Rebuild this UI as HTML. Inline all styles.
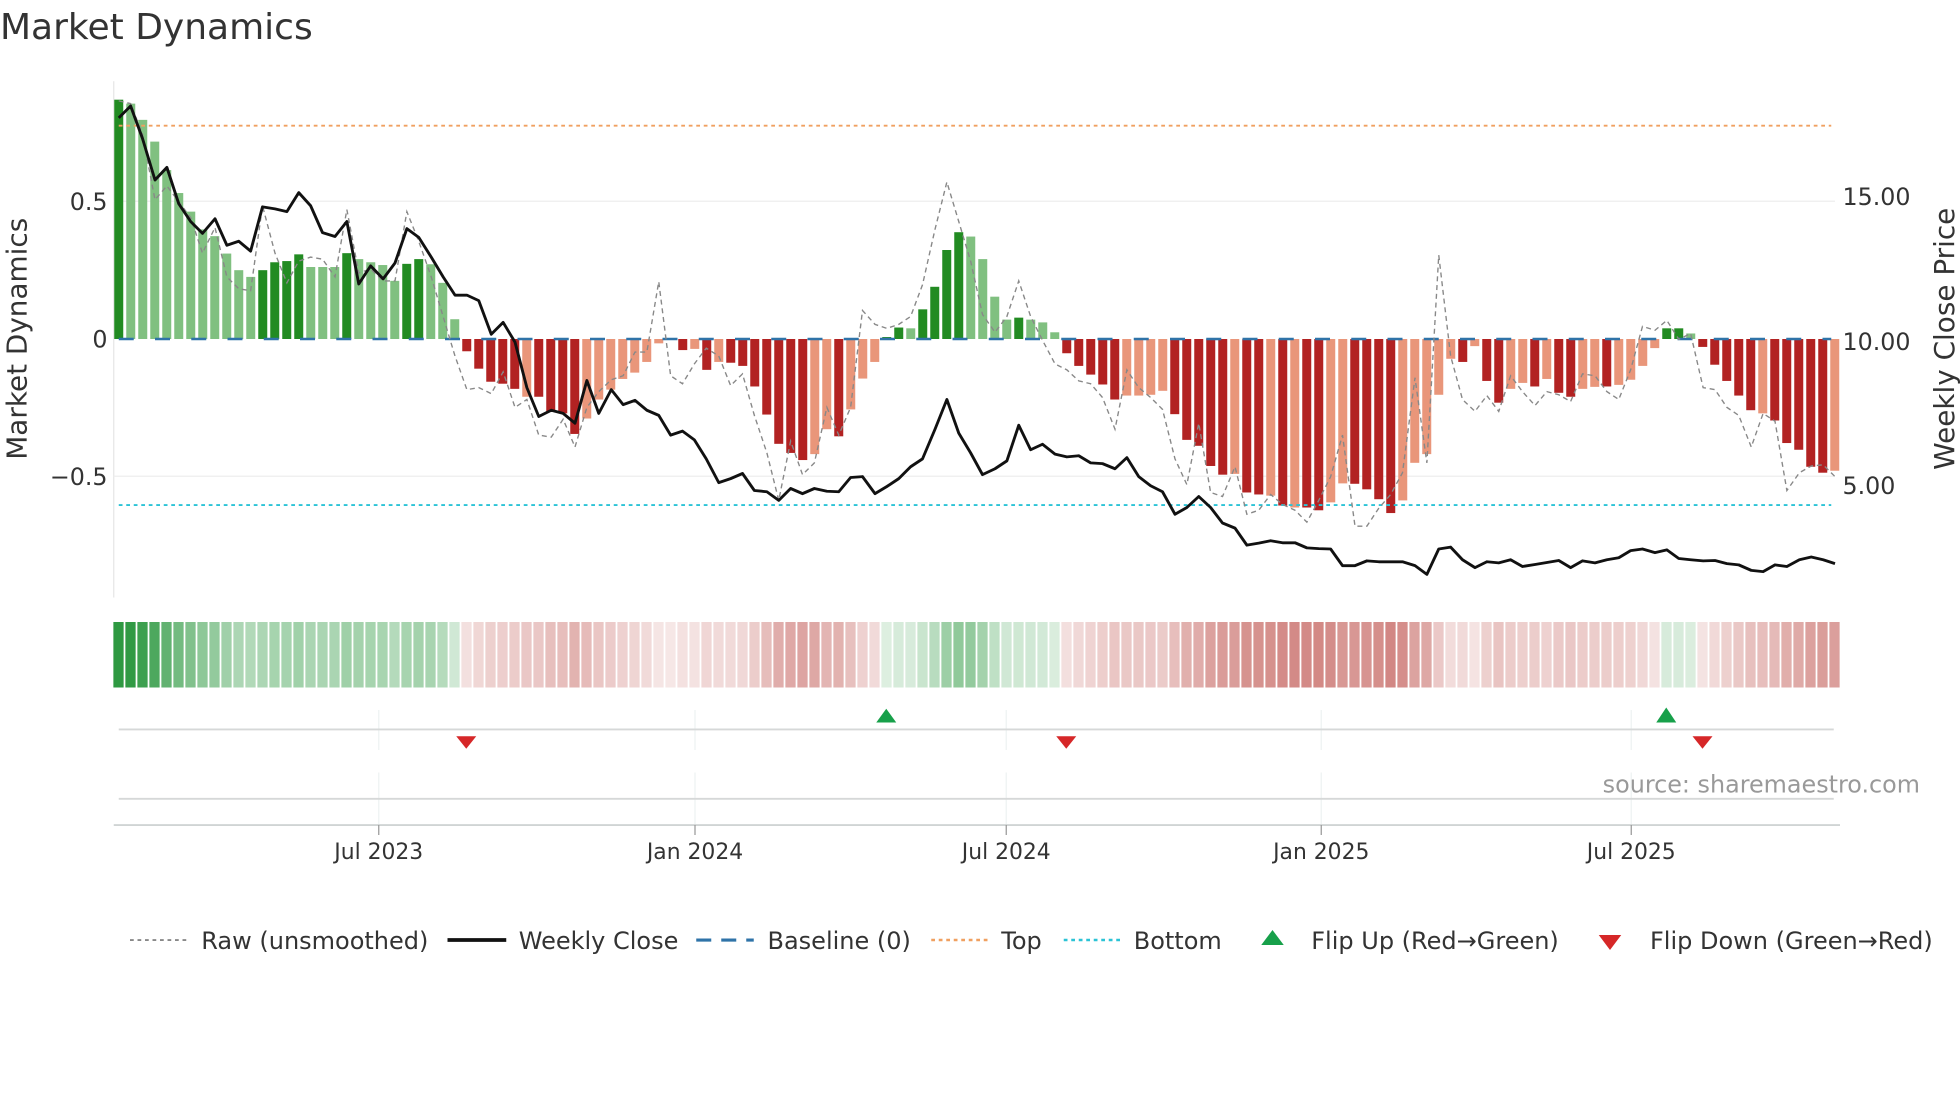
<!DOCTYPE html>
<html><head><meta charset="utf-8"><style>
html,body{margin:0;padding:0;background:#fff;}
svg{display:block;font-family:"DejaVu Sans","Liberation Sans",sans-serif;}
</style></head><body>
<svg id="s" width="1960" height="1102" viewBox="0 0 1568 881.6" xmlns="http://www.w3.org/2000/svg">
<text x="0" y="31" font-size="28.8" fill="#333">Market Dynamics</text>
<line x1="91" y1="65" x2="91" y2="478" stroke="#e6e6e6" stroke-width="1"/>
<line x1="91" y1="161" x2="1468" y2="161" stroke="#eeeeee" stroke-width="1"/>
<line x1="91" y1="381" x2="1468" y2="381" stroke="#eeeeee" stroke-width="1"/>
<g id="bars"></g>
<line x1="95" y1="100.5" x2="1465" y2="100.5" stroke="#f0a060" stroke-width="1.5" stroke-dasharray="3,3"/>
<line x1="95" y1="404" x2="1465" y2="404" stroke="#2bc3d6" stroke-width="1.5" stroke-dasharray="3,3"/>
<line x1="95" y1="271.2" x2="1465" y2="271.2" stroke="#2f73a8" stroke-width="2" stroke-dasharray="12,17"/>
<path id="raw" fill="none" stroke="#888" stroke-width="1.1" stroke-dasharray="4,3"/>
<path id="close" fill="none" stroke="#111" stroke-width="2.3" stroke-linejoin="round"/>
<g font-size="19" fill="#333" text-anchor="end">
<text x="86" y="168">0.5</text><text x="86" y="278">0</text><text x="86" y="388">−0.5</text>
</g>
<g font-size="19" fill="#333">
<text x="1474" y="164">15.00</text><text x="1474" y="280">10.00</text><text x="1474" y="395">5.00</text>
</g>
<text transform="translate(21,271) rotate(-90)" font-size="22.3" fill="#333" text-anchor="middle">Market Dynamics</text>
<text transform="translate(1563,271) rotate(-90)" font-size="22.3" fill="#333" text-anchor="middle">Weekly Close Price</text>
<g id="strip"></g>
<g stroke="#eef2f2" stroke-width="1">
<line x1="303" y1="568" x2="303" y2="600"/><line x1="556" y1="568" x2="556" y2="600"/><line x1="805" y1="568" x2="805" y2="600"/><line x1="1057" y1="568" x2="1057" y2="600"/><line x1="1305" y1="568" x2="1305" y2="600"/>
<line x1="303" y1="618" x2="303" y2="660"/><line x1="556" y1="618" x2="556" y2="660"/><line x1="805" y1="618" x2="805" y2="660"/><line x1="1057" y1="618" x2="1057" y2="660"/><line x1="1305" y1="618" x2="1305" y2="660"/>
</g>
<line x1="95" y1="583.5" x2="1467" y2="583.5" stroke="#d6d8d8" stroke-width="1.5"/>
<line x1="95" y1="639" x2="1467" y2="639" stroke="#d6d8d8" stroke-width="1.5"/>
<line x1="91" y1="660" x2="1472" y2="660" stroke="#d0d4d4" stroke-width="1.5"/>
<g stroke="#999" stroke-width="1">
<line x1="303" y1="660" x2="303" y2="668"/><line x1="556" y1="660" x2="556" y2="668"/><line x1="805" y1="660" x2="805" y2="668"/><line x1="1057" y1="660" x2="1057" y2="668"/><line x1="1305" y1="660" x2="1305" y2="668"/>
</g>
<g fill="#17a04a">
<path d="M709,567 L717,578 L701,578 Z"/><path d="M1333,566 L1341,578 L1325,578 Z"/>
</g>
<g fill="#d62728">
<path d="M365,589 L381,589 L373,599 Z"/><path d="M845,589 L861,589 L853,599 Z"/><path d="M1354,589 L1370,589 L1362,599 Z"/>
</g>
<g font-size="17.5" fill="#333" text-anchor="middle">
<text x="303" y="687">Jul 2023</text><text x="556" y="687">Jan 2024</text><text x="805" y="687">Jul 2024</text><text x="1057" y="687">Jan 2025</text><text x="1305" y="687">Jul 2025</text>
</g>
<text x="1536" y="634" font-size="19.1" fill="#999" text-anchor="end">source: sharemaestro.com</text>
<g font-size="19.2" fill="#333">
<line x1="104" y1="752" x2="149" y2="752" stroke="#888" stroke-width="1.5" stroke-dasharray="3,3"/>
<text x="161" y="759">Raw (unsmoothed)</text>
<line x1="358" y1="752" x2="405" y2="752" stroke="#111" stroke-width="3"/>
<text x="415" y="759">Weekly Close</text>
<line x1="557" y1="752" x2="603" y2="752" stroke="#2f73a8" stroke-width="2.5" stroke-dasharray="12,8"/>
<text x="614" y="759">Baseline (0)</text>
<line x1="745" y1="752" x2="790" y2="752" stroke="#f0a060" stroke-width="2" stroke-dasharray="3,3"/>
<text x="801" y="759">Top</text>
<line x1="851" y1="752" x2="896" y2="752" stroke="#2bc3d6" stroke-width="2" stroke-dasharray="3,3"/>
<text x="907" y="759">Bottom</text>
<path d="M1018,744 L1027,756 L1009,756 Z" fill="#17a04a"/>
<text x="1049" y="759">Flip Up (Red→Green)</text>
<path d="M1279,748 L1297,748 L1288,760 Z" fill="#d62728"/>
<text x="1320" y="759">Flip Down (Green→Red)</text>
</g>
</svg>
<script>
var zy=[252,262,303,358,430,488,535,580,597,641,683,700,683,663,660,643,675,675,675,640,655,663,670,710,667,655,668,715,807,
888,932,965,970,983,1003,1003,1040,1045,1097,1058,1010,985,958,942,915,868,857,885,882,935,915,917,925,977,1048,1122,1145,1163,1148,1085,1103,1035,957,915,
852,828,830,782,725,632,587,598,
655,750,808,803,808,815,840,
893,925,947,972,1010,1000,1000,998,988,1047,1112,1127,1178,1200,1198,1245,1250,1253,1278,1283,1283,1290,1270,1222,1223,1237,1262,1297,1265,1170,1148,998,907,915,875,963,1018,983,968,977,958,993,1003,983,978,977,973,960,925,880,
830,830,843,
877,922,963,1000,1037,1045,1063,1120,1137,1180,1195,1190];
var col="dllllllllllldddd"+"llld"+"llll"+"dd"+"lll"+"dddddldddd"+"llllllll"+"dldl"+"ddddddd"+"ll"+"d"+"lll"+"ddlddddl"+"llldlll"+"dddddllll"+"ddddd"+"l"+"dd"+"l"+"d"+"l"+"dd"+"ll"+"dddd"+"lllll"+"d"+"l"+"dd"+"ll"+"d"+"l"+"dd"+"ll"+"d"+"llll"+"ddl"+"dddddldddddl";
var NS="http://www.w3.org/2000/svg";
function el(t,a,p){var e=document.createElementNS(NS,t);for(var k in a)e.setAttribute(k,a[k]);p.appendChild(e);return e;}
var bars=document.getElementById("bars"),strip=document.getElementById("strip");
var Z=271.2;
for(var i=0;i<zy.length;i++){
  var x=95+9.6*i, y=zy[i]/3.16, v=(Z-y)/220, c=col[i]||"l";
  var pos=y<Z;
  var fill=pos?(c=="d"?"#228B22":"#80c080"):(c=="d"?"#B22222":"#E9967A");
  if(Math.abs(y-Z)>0.5) el("rect",{x:x-3.6,y:Math.min(y,Z),width:7.2,height:Math.abs(y-Z),fill:fill},bars);
  var t=Math.min(1,Math.abs(v)/0.9), a=0.15+0.85*t;
  var b=pos?[40,150,60]:[195,95,90];
  var r=Math.round(255+(b[0]-255)*a),g=Math.round(255+(b[1]-255)*a),bb=Math.round(255+(b[2]-255)*a);
  el("rect",{x:x-4.3,y:497.6,width:8.2,height:52.4,fill:"rgb("+r+","+g+","+bb+")"},strip);
}
function path(s1,s2){var pts=[];
 s1.trim().split(/\s+/).forEach(function(p){var q=p.split(",");pts.push([q[0]/2,q[1]/3.16]);});
 s2.trim().split(/\s+/).forEach(function(p){var q=p.split(",");pts.push([784+q[0]/2,q[1]/3.16]);});
 return "M"+pts.map(function(p){return p[0].toFixed(1)+","+p[1].toFixed(1)}).join(" L");}
var c1="190,298 209,268 228,350 248,455 267,423 286,515 305,560 324,590 344,553 363,620 382,610 401,635 420,523 440,528 459,535 478,487 497,520 516,588 536,598 555,560 574,718 593,672 613,705 632,665 651,578 670,600 690,650 709,700 728,746 747,746 766,760 786,845 805,815 824,865 843,980 862,1053 882,1037 901,1045 920,1070 939,962 958,1045 978,985 997,1023 1016,1012 1035,1037 1054,1050 1073,1100 1092,1090 1111,1112 1130,1160 1150,1220 1169,1210 1188,1197 1207,1240 1227,1243 1246,1265 1265,1235 1284,1248 1303,1235 1323,1242 1342,1243 1361,1207 1380,1205 1400,1248 1419,1230 1438,1210 1457,1180 1476,1160 1496,1085 1515,1010 1534,1095 1553,1145";
var c2="4,1200 24,1185 43,1165 62,1075 81,1137 100,1123 120,1148 139,1155 158,1152 177,1170 196,1172 216,1185 235,1157 254,1205 273,1228 292,1243 312,1300 331,1283 350,1255 369,1283 388,1322 408,1335 427,1378 446,1373 465,1367 484,1372 504,1372 523,1385 542,1387 561,1388 580,1430 600,1430 619,1418 638,1420 657,1420 676,1420 696,1430 715,1452 734,1388 753,1383 772,1415 792,1435 811,1420 830,1423 849,1415 868,1432 888,1427 907,1422 926,1417 945,1435 964,1418 984,1423 1003,1415 1022,1410 1041,1392 1060,1388 1080,1397 1099,1390 1118,1412 1137,1415 1157,1418 1176,1417 1195,1425 1214,1428 1234,1442 1253,1445 1272,1428 1291,1432 1311,1415 1330,1408 1349,1415 1368,1425";
var r1="190,255 209,262 228,340 248,505 267,470 286,510 305,550 324,640 344,575 363,700 382,730 401,735 420,520 440,640 459,715 478,660 497,650 516,655 536,700 555,530 574,690 593,680 613,710 632,710 651,535 670,610 690,700 709,800 728,900 747,985 766,980 786,995 805,940 824,1030 843,1010 862,1100 882,1105 901,1060 920,1130 939,1030 958,990 978,960 997,950 1016,890 1035,890 1054,712 1073,950 1092,970 1111,920 1130,880 1150,900 1169,975 1188,945 1207,1050 1227,1145 1246,1265 1265,1115 1284,1200 1303,1170 1323,1030 1342,1100 1361,1030 1380,785 1400,820 1419,830 1438,820 1457,800 1476,720 1496,580 1515,460 1534,560 1553,660";
var r2="4,795 24,840 43,800 62,710 81,800 100,860 120,920 139,935 158,963 177,970 196,1005 216,1085 235,935 254,980 273,1005 292,1035 312,1160 331,1225 350,1070 369,1245 388,1255 408,1180 427,1300 446,1290 465,1250 484,1275 504,1290 523,1320 542,1265 561,1205 580,1100 600,1330 619,1330 638,1285 657,1250 676,1195 696,955 715,1170 734,645 753,900 772,1010 792,1040 811,1000 830,1040 849,950 868,990 888,1025 907,990 926,998 945,1015 964,945 984,950 1003,990 1022,1010 1041,935 1060,825 1080,835 1099,810 1118,858 1137,843 1157,980 1176,985 1195,1030 1214,1050 1234,1130 1253,1045 1272,1065 1291,1240 1311,1195 1330,1178 1349,1175 1368,1205";
document.getElementById("close").setAttribute("d",path(c1,c2));
document.getElementById("raw").setAttribute("d",path(r1,r2));
</script>
</body></html>
